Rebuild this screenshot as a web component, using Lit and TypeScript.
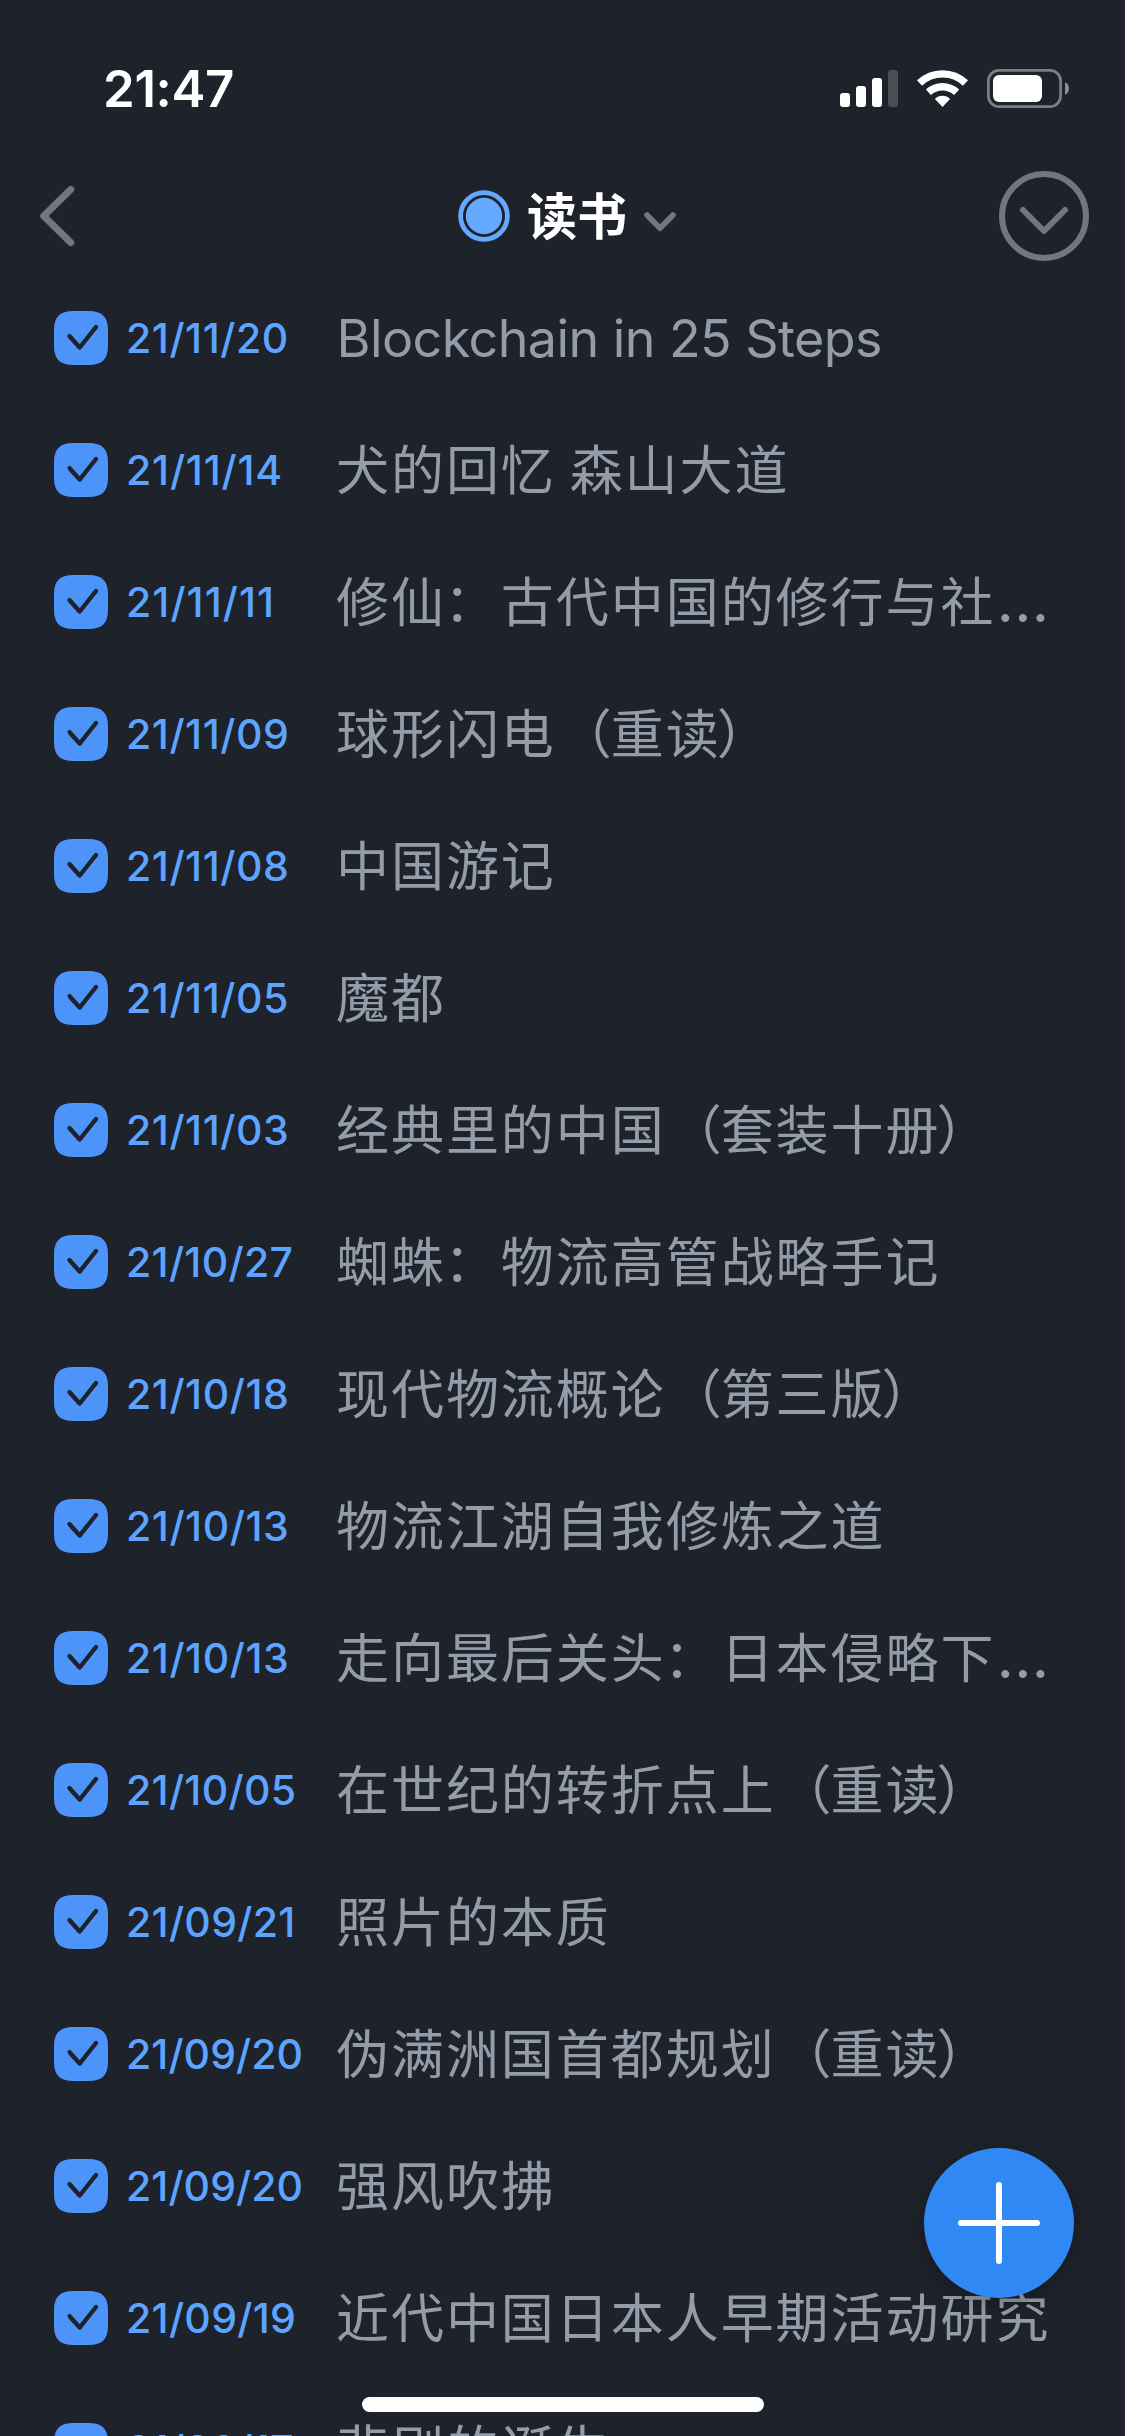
import { LitElement, html, css } from "lit";
import { customElement, property } from "lit/decorators.js";
import { styleMap } from "lit/directives/style-map.js";

interface Book { date: string; title: string; }

const BOOKS: Book[] = [
  { date: "21/11/20", title: "Blockchain in 25 Steps" },
  { date: "21/11/14", title: "犬的回忆 森山大道" },
  { date: "21/11/11", title: "修仙：古代中国的修行与社…" },
  { date: "21/11/09", title: "球形闪电（重读）" },
  { date: "21/11/08", title: "中国游记" },
  { date: "21/11/05", title: "魔都" },
  { date: "21/11/03", title: "经典里的中国（套装十册）" },
  { date: "21/10/27", title: "蜘蛛：物流高管战略手记" },
  { date: "21/10/18", title: "现代物流概论（第三版）" },
  { date: "21/10/13", title: "物流江湖自我修炼之道" },
  { date: "21/10/13", title: "走向最后关头：日本侵略下…" },
  { date: "21/10/05", title: "在世纪的转折点上（重读）" },
  { date: "21/09/21", title: "照片的本质" },
  { date: "21/09/20", title: "伪满洲国首都规划（重读）" },
  { date: "21/09/20", title: "强风吹拂" },
  { date: "21/09/19", title: "近代中国日本人早期活动研究" },
  { date: "21/09/17", title: "悲剧的诞生" },
];

@customElement("status-bar")
class StatusBar extends LitElement {
  static styles = css`
    :host { display: flex; justify-content: space-between; align-items: center; height: 168px; padding: 8px 56px 0 103px; box-sizing: border-box; color: #fff; }
    .time { font: 600 51px/60px Inter, sans-serif; letter-spacing: -0.4px; padding-top: 2px; }
    .icons { display: block; }
  `;
  render() {
    return html`
      <div class="time">21:47</div>
      <svg class="icons" width="230" height="40" viewBox="839 68 230 40">
        <g fill="#fff">
          <rect x="840" y="93" width="10" height="14" rx="3" />
          <rect x="856" y="86" width="10" height="21" rx="3" />
          <rect x="872" y="78" width="10" height="29" rx="3" />
          <rect x="888" y="70" width="10" height="37" rx="3" fill="#4b4e55" />
        </g>
        <g fill="none" stroke="#fff" stroke-width="7.4">
          <path d="M919.500 83a33.500 33.500 0 0 1 46 0" />
          <path d="M928.400 92.300a20.500 20.500 0 0 1 28.200 0" />
        </g>
        <path d="M942.500 107l-7.600-8.100a10.800 10.800 0 0 1 15.200 0z" fill="#fff" />
        <rect x="988.400" y="70.400" width="72.200" height="36.200" rx="10.500" fill="none" stroke="#7c7d80" stroke-width="2.800" />
        <rect x="993" y="75" width="49" height="27" rx="6" fill="#fff" />
        <path d="M1065 82.200c5.300 2 5.300 10.600 0 12.600z" fill="#8b8d91" />
      </svg>
    `;
  }
}

@customElement("list-header")
class ListHeader extends LitElement {
  static styles = css`
    :host { display: grid; grid-template-columns: 1fr auto 1fr; align-items: center; height: 96px; margin-bottom: 8px; padding: 0 35px 0 39px; box-sizing: border-box; }
    .icon { display: block; }
    .center { display: flex; align-items: center; padding-left: 6px; }
    .name { font: 700 50px/80px Inter, "Noto Sans CJK SC", sans-serif; color: #fff; margin: 0 16px 0 17px; padding-top: 1px; }
    .arrow { margin-top: 11px; }
    .end { justify-self: end; }
  `;
  render() {
    return html`
      <svg class="icon" width="37" height="62" viewBox="0 0 37 62" fill="none" stroke="#727684" stroke-width="7" stroke-linecap="round" stroke-linejoin="round">
        <path d="M31.700 4.500L4.700 31L31.700 57.500" />
      </svg>
      <div class="center">
        <svg class="icon" width="52" height="52" viewBox="0 0 52 52">
          <circle cx="26" cy="26" r="23.400" fill="none" stroke="#65a9ff" stroke-width="4.800" />
          <circle cx="26" cy="26" r="18.200" fill="#65a9ff" />
        </svg>
        <div class="name">读书</div>
        <svg class="icon arrow" width="34" height="22" viewBox="0 0 34 22" fill="none" stroke="#727684" stroke-width="5.600" stroke-linecap="round" stroke-linejoin="round">
          <path d="M4 4L17 17.200L30 4" />
        </svg>
      </div>
      <svg class="icon end" width="92" height="92" viewBox="0 0 92 92" fill="none" stroke="#727684" stroke-width="6" stroke-linecap="round" stroke-linejoin="round">
        <circle cx="46" cy="46" r="42" />
        <path d="M25 40L46 61L67 40" />
      </svg>
    `;
  }
}

@customElement("book-row")
class BookRow extends LitElement {
  static styles = css`
    :host { display: flex; align-items: center; height: 132px; padding-left: 54px; box-sizing: border-box; flex: none; }
    .box { display: block; flex: none; }
    .date { flex: none; width: 210px; margin-left: 18px; font: 500 41px/60px Inter, sans-serif; color: #5ca4ff; white-space: nowrap; }
    .title { font: 400 53px/76px Inter, "Noto Sans CJK SC", sans-serif; letter-spacing: 1.95px; word-spacing: -3px; color: #939ca8; white-space: nowrap; padding-top: 2px; }
    .latin { font-size: 52px; letter-spacing: -0.57px; word-spacing: 0; padding-left: 0.5px; }
    .more { font-size: 61px; line-height: 1px; letter-spacing: 0; margin-left: 1px; }
    .open { margin: 0 -3px 0 3px; }
    .close { margin-left: -4px; }
    .colon { margin: 0 2px 0 -2px; }
  `;
  @property({ attribute: false }) book!: Book;

  // Full-width punctuation is nudged optically inside its cell.
  private piece(text: string) {
    switch (text) {
      case "（": return html`<span class="open">（</span>`;
      case "）": return html`<span class="close">）</span>`;
      case "：": return html`<span class="colon">：</span>`;
      case "…": return html`<span class="more">…</span>`;
      default: return text;
    }
  }

  render() {
    const { date, title } = this.book;
    const latin = /^[\x00-\x7f]+$/.test(title);
    // The digit 1 is narrow in this face, so dates rich in it get looser tracking.
    const ones = date.split("1").length - 1;
    const tracking = (2 * ones - 1.5) / 8;
    return html`
      <svg class="box" width="54" height="54" viewBox="0 0 54 54">
        <path d="M19 0H35C48 0 54 6 54 19V35C54 48 48 54 35 54H19C6 54 0 48 0 35V19C0 6 6 0 19 0Z" fill="#4c94f9" />
        <path d="M15.600 25.200L25.700 36.500L42 16" fill="none" stroke="#1e222a" stroke-width="4.400" stroke-linecap="round" stroke-linejoin="round" />
      </svg>
      <div class="date" style=${styleMap({ letterSpacing: `${tracking}px` })}>${date}</div>
      <div class="title ${latin ? "latin" : ""}">${title.split(/([（）：…])/).map((t) => this.piece(t))}</div>
    `;
  }
}

@customElement("app-root")
class AppRoot extends LitElement {
  static styles = css`
    :host { display: flex; flex-direction: column; position: relative; width: 1125px; height: 2436px; overflow: hidden; background: #1e222a; }
    .list { display: flex; flex-direction: column; flex: 1; min-height: 0; overflow: hidden; }
    .add { position: absolute; right: 51px; bottom: 138px; width: 150px; height: 150px; border: 0; padding: 0; border-radius: 50%; background: #3088f5; box-shadow: 0 4px 20px rgba(0, 0, 0, 0.28); display: grid; place-items: center; }
    .home { position: absolute; left: 362px; bottom: 24px; width: 402px; height: 15px; border-radius: 8px; background: #fff; }
  `;
  render() {
    return html`
      <status-bar></status-bar>
      <list-header></list-header>
      <div class="list">${BOOKS.map((b) => html`<book-row .book=${b}></book-row>`)}</div>
      <button class="add">
        <svg width="82" height="82" viewBox="0 0 82 82" stroke="#fff" stroke-width="6" stroke-linecap="round">
          <path d="M41 3V79M3 41H79" />
        </svg>
      </button>
      <div class="home"></div>
    `;
  }
}
